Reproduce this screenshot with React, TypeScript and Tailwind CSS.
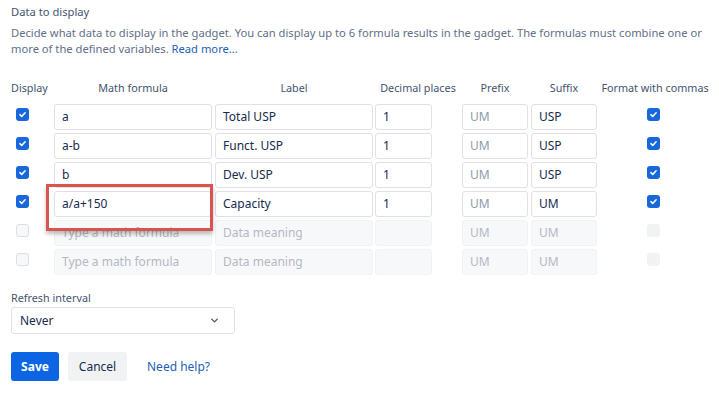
import { ChevronDown } from "lucide-react";

type Row = {
  on: boolean;
  formula: string;
  label: string;
  decimals: string;
  prefix: string;
  suffix: string;
  enabled: boolean;
  highlight?: boolean;
};

const rows: Row[] = [
  { on: true, formula: "a", label: "Total USP", decimals: "1", prefix: "", suffix: "USP", enabled: true },
  { on: true, formula: "a-b", label: "Funct. USP", decimals: "1", prefix: "", suffix: "USP", enabled: true },
  { on: true, formula: "b", label: "Dev. USP", decimals: "1", prefix: "", suffix: "USP", enabled: true },
  { on: true, formula: "a/a+150", label: "Capacity", decimals: "1", prefix: "", suffix: "UM", enabled: true, highlight: true },
  { on: false, formula: "", label: "", decimals: "", prefix: "", suffix: "", enabled: false },
  { on: false, formula: "", label: "", decimals: "", prefix: "", suffix: "", enabled: false },
];

function Check({ on, disabled }: { on: boolean; disabled?: boolean }) {
  if (on) {
    return (
      <span className="flex size-[13px] items-center justify-center rounded-[3px] bg-[#1868db]">
        <svg viewBox="0 0 12 12" className="size-[9px]" fill="none">
          <path d="M2.5 6.2 5 8.5 9.5 3.8" stroke="white" strokeWidth="2" strokeLinecap="round" strokeLinejoin="round" />
        </svg>
      </span>
    );
  }
  return (
    <span
      className={
        disabled
          ? "block size-[13px] rounded-[3px] bg-[#f1f2f4]"
          : "block size-[13px] rounded-[3px] border border-[#dcdfe4] bg-[#f7f8f9]"
      }
    />
  );
}

function Field({
  value,
  placeholder,
  width,
  enabled,
}: {
  value: string;
  placeholder?: string;
  width: string;
  enabled: boolean;
}) {
  return (
    <div
      className={`${width} flex h-[26px] items-center rounded-[3px] border px-[7px] text-[12px] ${
        enabled ? "border-[#dfe1e6] bg-white" : "border-[#f1f2f4] bg-[#f7f8f9]"
      }`}
    >
      {value ? (
        <span className="text-[#172b4d]">{value}</span>
      ) : (
        <span className={enabled ? "text-[#8c9bab]" : "text-[#b3b9c4]"}>{placeholder}</span>
      )}
    </div>
  );
}

export default function App() {
  return (
    <div
      className="min-h-screen bg-white pl-[11px] pt-[4px] text-[#44546f]"
      style={{ fontFamily: '"Noto Sans", "Open Sans", sans-serif' }}
    >
      <p className="text-[11.2px] leading-[16px]">Data to display</p>
      <p className="mt-[5px] w-[700px] text-[11.2px] leading-[16px] text-[#626f86]">
        Decide what data to display in the gadget. You can display up to 6 formula results in the gadget. The formulas
        must combine one or more of the defined variables. <span className="text-[#1d5fb4]">Read more...</span>
      </p>

      <div className="mt-[23px] flex h-[16px] items-center text-[10.8px] text-[#44546f]">
        <span className="w-[43px]">Display</span>
        <span className="w-[158px] text-center">Math formula</span>
        <span className="ml-[3px] w-[158px] text-center">Label</span>
        <span className="ml-[2px] w-[86px] text-center">Decimal places</span>
        <span className="ml-[1px] w-[66px] text-center">Prefix</span>
        <span className="ml-[3px] w-[66px] text-center">Suffix</span>
        <span className="w-[116px] text-center">Format with commas</span>
      </div>

      <div className="mt-[8px] flex flex-col gap-[3px]">
        {rows.map((r, i) => (
          <div key={i} className="relative flex items-center">
            <div className="flex w-[43px] pl-[5px] pb-[5px]">
              <Check on={r.on} />
            </div>
            <Field value={r.formula} placeholder="Type a math formula" width="w-[158px]" enabled={r.enabled} />
            <div className="ml-[3px]">
              <Field value={r.label} placeholder="Data meaning" width="w-[158px]" enabled={r.enabled} />
            </div>
            <div className="ml-[2px] w-[87px]">
              <Field value={r.decimals} width="w-[57px]" enabled={r.enabled} />
            </div>
            <Field value={r.prefix} placeholder="UM" width="w-[66px]" enabled={r.enabled} />
            <div className="ml-[3px]">
              <Field value={r.suffix} placeholder="UM" width="w-[66px]" enabled={r.enabled} />
            </div>
            <div className="flex w-[112px] justify-center pb-[5px]">
              <Check on={r.on} disabled={!r.enabled} />
            </div>
            {r.highlight && (
              <div className="pointer-events-none absolute left-[35px] top-[-7px] z-10 h-[47px] w-[167px] border-[3px] border-[#d9534f] shadow-[0_3px_4px_rgba(0,0,0,0.25)]" />
            )}
          </div>
        ))}
      </div>

      <p className="mt-[15px] text-[10.8px] leading-[16px] text-[#44546f]">Refresh interval</p>
      <div className="mt-[1px] flex h-[27px] w-[224px] items-center justify-between rounded-[3px] border border-[#dfe1e6] bg-white pl-[8px] pr-[14px] text-[12px] text-[#172b4d]">
        <span>Never</span>
        <ChevronDown className="size-[11px] text-[#44546f]" strokeWidth={3} />
      </div>

      <div className="mt-[18px] flex items-center">
        <button className="h-[29px] w-[48px] rounded-[3px] bg-[#0c66e4] text-[12px] font-bold text-white">Save</button>
        <button className="ml-[9px] h-[29px] w-[59px] rounded-[3px] bg-[#f1f2f4] text-[12px] text-[#172b4d]">
          Cancel
        </button>
        <span className="ml-[20px] text-[12px] text-[#1d5fb4]">Need help?</span>
      </div>
    </div>
  );
}
